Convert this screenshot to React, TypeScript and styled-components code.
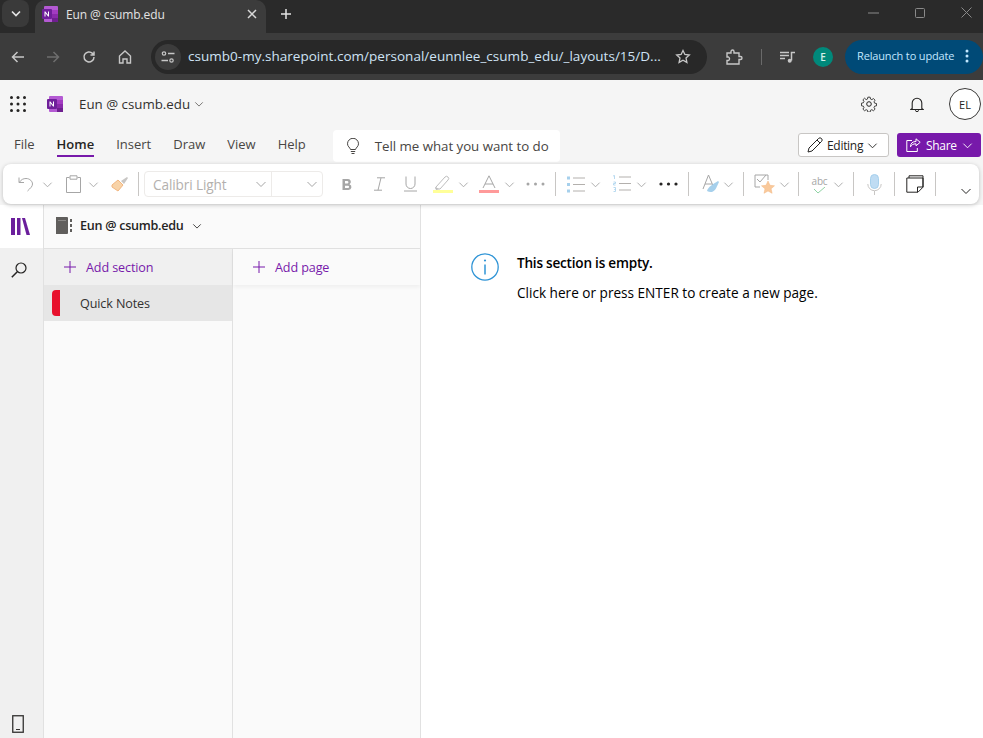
import React from "react";
import styled, { createGlobalStyle } from "styled-components";

const Global = createGlobalStyle`
  html, body { margin: 0; padding: 0; height: 100%; background: #fff; overflow: hidden; }
  #root { height: 100%; }
  * { box-sizing: border-box; }
`;

const F = `"Open Sans", "Noto Sans", "Liberation Sans", sans-serif`;

const Page = styled.div`
  width: 983px; height: 738px; display: flex; flex-direction: column; overflow: hidden;
  font-family: ${F}; color: #252423;
`;
const TabStrip = styled.div`
  height: 33px; flex: none; background: #2a2a2a; display: flex; align-items: stretch; padding-left: 2px;
`;
const TabSearch = styled.div`
  width: 27px; height: 27px; border-radius: 8px; background: #3a3a3a;
  display: flex; align-items: center; justify-content: center;
`;
const ActiveTab = styled.div`
  width: 231px; margin-left: 6px; background: #3c3c3c; border-radius: 10px 10px 0 0;
  display: flex; align-items: center; padding: 0 9px 5px 7px; gap: 8px;
`;
const TabTitle = styled.span`
  flex: 1; font-size: 12px; letter-spacing: -0.1px; color: #e3e3e3; white-space: nowrap;
`;
const NewTab = styled.div`
  margin-left: 9px; width: 22px; display: flex; align-items: center; justify-content: center; padding-bottom: 6px;
`;
const WindowControls = styled.div`
  margin-left: auto; display: flex; align-items: center; gap: 36px; padding: 0 11px 8px 0;
`;
const Toolbar = styled.div`
  height: 47px; flex: none; background: #3c3c3c; display: flex; align-items: center;
`;
const NavSlot = styled.div<{ $w?: number }>`
  width: ${(p) => p.$w ?? 36}px; display: flex; align-items: center; justify-content: center; flex: none;
`;
const Omnibox = styled.div`
  width: 556px; height: 34px; margin-left: 8px; border-radius: 17px; background: #282828;
  display: flex; align-items: center; padding: 0 16px 0 4px; flex: none;
`;
const SiteIcon = styled.div`
  width: 26px; height: 26px; border-radius: 50%; background: #3c3c3c;
  display: flex; align-items: center; justify-content: center; flex: none;
`;
const Url = styled.span`
  margin-left: 7px; flex: 1; font-size: 13.5px; line-height: 18px; padding-bottom: 1px; letter-spacing: 0.02px; color: #cfe3f5; white-space: nowrap; overflow: hidden;
`;
const Divider = styled.div`
  width: 1px; height: 16px; background: #6a6a6a; flex: none;
`;
const Avatar = styled.div`
  width: 20px; height: 20px; border-radius: 50%; background: #00897b; color: #d5efe9;
  font-size: 10px; font-weight: 600; display: flex; align-items: center; justify-content: center; flex: none;
`;
const Relaunch = styled.div`
  margin-left: 12px; width: 138px; height: 34px; border-radius: 17px; background: #004a77; color: #c2e7ff;
  font-size: 11px; letter-spacing: -0.15px; display: flex; align-items: center; justify-content: space-between; padding: 0 14px 2px 12px; flex: none;
`;
const AppHeader = styled.div`
  height: 46px; flex: none; background: #f5f5f5; display: flex; align-items: center; padding: 2px 2px 0 10px;
`;
const NotebookTitle = styled.span`
  margin-left: 14px; font-size: 13.3px; color: #323130; display: flex; align-items: center; gap: 4px;
`;
const HeaderRight = styled.div`
  margin-left: auto; display: flex; align-items: center; gap: 33px;
`;
const UserCircle = styled.div`
  width: 32px; height: 32px; margin-left: -8px; border-radius: 50%; border: 1px solid #3b3a39; background: #fff;
  font-size: 11px; color: #252423; display: flex; align-items: center; justify-content: center;
`;
const TabsRow = styled.div`
  height: 38px; flex: none; background: #f5f5f5; display: flex; align-items: flex-start; padding: 0 2px 0 14px;
`;
const MenuItem = styled.div<{ $active?: boolean }>`
  font-size: 13px; line-height: 17px; padding: 10px 0 2px; margin-right: 22px;
  color: ${(p) => (p.$active ? "#252423" : "#484644")};
  font-weight: ${(p) => (p.$active ? 600 : 400)};
  border-bottom: 2px solid ${(p) => (p.$active ? "#7719aa" : "transparent")};
`;
const TellMe = styled.div`
  width: 227px; height: 32px; margin-left: 5px; margin-top: 4px; background: #fff; border-radius: 4px;
  display: flex; align-items: center; padding-left: 13px; gap: 15px;
  font-size: 13.3px; letter-spacing: -0.04px; color: #484644; white-space: nowrap;
`;
const RightActions = styled.div`
  margin-left: auto; margin-top: 7px; display: flex; gap: 8px;
`;
const EditingBtn = styled.div`
  width: 91px; height: 24px; background: #fff; border: 1px solid #c8c6c4; border-radius: 3px;
  font-size: 12px; letter-spacing: -0.3px; color: #252423; display: flex; align-items: center; gap: 4px; padding-left: 8px;
`;
const ShareBtn = styled.div`
  width: 84px; height: 24px; background: #7719aa; border-radius: 3px; color: #fff;
  font-size: 12px; letter-spacing: -0.3px; display: flex; align-items: center; gap: 5px; padding-left: 9px;
`;
const RibbonWrap = styled.div`
  flex: none; height: 41px; background: #f5f5f5; padding: 0 4px 0 3px; position: relative; z-index: 3;
`;
const Ribbon = styled.div`
  height: 40px; background: #fff; border-radius: 8px; box-shadow: 0 1px 4px rgba(0,0,0,.22);
  display: flex; align-items: center; padding-left: 15px;
`;
const RibbonSlot = styled.div<{ $w: number; $pad?: number; $align?: string }>`
  width: ${(p) => p.$w}px; flex: none; display: flex; align-items: center;
  padding-left: ${(p) => p.$pad ?? 0}px;
  justify-content: ${(p) => p.$align ?? "flex-start"};
`;
const Spacer = styled.span<{ $w: number }>`
  width: ${(p) => p.$w}px; flex: none;
`;
const Sep = styled.div`
  width: 1px; height: 24px; background: #c8c6c4; flex: none;
`;
const CollapseSlot = styled.div`
  margin-left: 24px; padding-top: 13px; display: flex;
`;
const FontBox = styled.div`
  width: 179px; height: 26px; border: 1px solid #edebe9; border-radius: 4px; margin-left: 5px; flex: none;
  display: grid; grid-template-columns: 127px 1fr; font-size: 13.6px; letter-spacing: -0.1px; color: #b3b0ad;
`;
const FontCell = styled.div<{ $line?: boolean }>`
  display: flex; align-items: center; justify-content: space-between; padding: 0 4px 0 8px;
  border-right: ${(p) => (p.$line ? "1px solid #edebe9" : "none")};
`;
const AbcMark = styled.span`
  width: 19px; text-align: center; line-height: 12px; letter-spacing: -0.2px; font-size: 10px; color: #a6a6a6;
  svg { display: block; margin: 0 auto; }
`;
const Body = styled.div`
  flex: 1; min-height: 0; display: flex; background: #fff;
`;
const Rail = styled.div`
  width: 44px; flex: none; background: #f0f0f0; border-right: 1px solid #e1e1e1; display: flex; flex-direction: column;
`;
const RailTop = styled.div`
  height: 43px; background: #fff; margin-right: -1px; border-right: 1px solid #e1e1e1; display: flex; align-items: center; justify-content: center; padding-right: 2px;
`;
const RailBtn = styled.div`
  height: 44px; display: flex; align-items: center; justify-content: center; padding-right: 5px;
`;
const RailBottom = styled.div`
  margin-top: auto; height: 27px; display: flex; align-items: flex-start; justify-content: center; padding: 4px 8px 0 0;
`;
const NavPane = styled.div`
  width: 377px; flex: none; background: #fafafa; border-right: 1px solid #e1e1e1; display: flex; flex-direction: column;
`;
const NotebookBar = styled.div`
  height: 44px; flex: none; border-bottom: 1px solid #e1e1e1; display: flex; align-items: center; padding: 0 0 2px 11px;
  font-size: 12.6px; font-weight: 600; letter-spacing: -0.28px; color: #252423;
`;
const NotebookName = styled.span`
  margin-left: 8px; margin-right: 9px;
`;
const Columns = styled.div`
  flex: 1; display: flex; min-height: 0;
`;
const SectionCol = styled.div`
  width: 189px; flex: none; border-right: 1px solid #e1e1e1; background: #fafafa; display: flex; flex-direction: column;
`;
const AddRow = styled.div<{ $bg: string; $shadow?: boolean }>`
  height: 36px; flex: none; background: ${(p) => p.$bg}; display: flex; align-items: center; padding-left: 20px; gap: 10px;
  font-size: 12.6px; letter-spacing: -0.12px; color: #7719aa;
  box-shadow: ${(p) => (p.$shadow ? "0 2px 4px rgba(0,0,0,.05)" : "none")};
`;
const SectionRow = styled.div`
  height: 36px; flex: none; background: #e6e6e6; position: relative; display: flex; align-items: center; padding-left: 36px;
  font-size: 12.6px; letter-spacing: -0.12px; color: #323130;
`;
const SectionTab = styled.div`
  position: absolute; left: 8px; top: 5px; width: 8px; height: 26px; background: #e8112d; border-radius: 4px 0 0 4px;
`;
const PagesCol = styled.div`
  flex: 1; background: #fafafa;
`;
const Content = styled.div`
  flex: 1; background: #fff; display: flex; align-items: flex-start; padding: 48px 0 0 50px; gap: 18px;
`;
const Message = styled.div`
  display: flex; flex-direction: column; gap: 12px; color: #000; font-size: 13.6px; line-height: 18px; padding-top: 1px;
`;
const MessageTitle = styled.div`
  font-weight: 600; letter-spacing: -0.23px;
`;

const Chev = ({ c = "#a6a6a6", s = 12 }: { c?: string; s?: number }) => (
  <svg width={s} height={s} viewBox="0 0 12 12" fill="none" style={{ flex: "none" }}>
    <path d="M1.5 4l4.5 4.5L10.5 4" stroke={c} strokeWidth="1" />
  </svg>
);

const OneNote = ({ s = 16 }: { s?: number }) => (
  <svg width={s} height={s} viewBox="0 0 16 16" style={{ flex: "none" }}>
    <rect x="2" y="0" width="14" height="16" rx="1" fill="#b45ad3" />
    <rect x="10" y="4" width="6" height="4" fill="#a33bc2" />
    <rect x="10" y="8" width="6" height="4" fill="#8a2aab" />
    <rect x="10" y="12" width="6" height="4" fill="#6f1f90" />
    <rect x="0" y="3" width="10" height="10" rx="1" fill="#6f1f9a" />
    <path d="M2.5 10.5v-5h.9l2.6 3.3V5.500h1v5h-.9L3.500 7.200v3.300z" fill="#fff" />
  </svg>
);

const Icon = ({ w, h, children, vb }: { w: number; h: number; vb?: string; children: React.ReactNode }) => (
  <svg width={w} height={h} viewBox={vb ?? `0 0 ${w} ${h}`} fill="none" style={{ flex: "none", display: "block" }}>
    {children}
  </svg>
);

const Waffle = () => (
  <Icon w={16} h={16}>
    {[1.5, 8, 14.5].flatMap((y) =>
      [1.5, 8, 14.5].map((x) => <circle key={`${x}-${y}`} cx={x} cy={y} r="1.5" fill="#252423" />)
    )}
  </Icon>
);

const Plus = () => (
  <Icon w={12} h={12}>
    <path d="M6 0v12M0 6h12" stroke="#7719aa" strokeWidth="1" />
  </Icon>
);

export default function App() {
  return (
    <Page>
      <Global />
      <TabStrip>
        <TabSearch>
          <Icon w={10} h={8}>
            <path d="M1 1.500l4 4 4-4" stroke="#e3e3e3" strokeWidth="1.700" />
          </Icon>
        </TabSearch>
        <ActiveTab>
          <OneNote />
          <TabTitle>Eun @ csumb.edu</TabTitle>
          <Icon w={10} h={10}>
            <path d="M1 1l8 8M9 1l-8 8" stroke="#d8d8d8" strokeWidth="1.500" />
          </Icon>
        </ActiveTab>
        <NewTab>
          <Icon w={12} h={12}>
            <path d="M6 1v10M1 6h10" stroke="#e3e3e3" strokeWidth="1.500" />
          </Icon>
        </NewTab>
        <WindowControls>
          <Icon w={11} h={2}>
            <path d="M0 1h11" stroke="#8a8a8a" />
          </Icon>
          <Icon w={10} h={10}>
            <rect x=".5" y=".5" width="9" height="9" rx="1" stroke="#8a8a8a" />
          </Icon>
          <Icon w={11} h={11}>
            <path d="M.5.5l10 10M10.500.5l-10 10" stroke="#8a8a8a" />
          </Icon>
        </WindowControls>
      </TabStrip>
      <Toolbar>
        <NavSlot $w={35}>
          <Icon w={14} h={12}>
            <path d="M13 6H1.500M6.500 1l-5 5 5 5" stroke="#c7c7c7" strokeWidth="1.500" />
          </Icon>
        </NavSlot>
        <NavSlot>
          <Icon w={14} h={12}>
            <path d="M1 6h11.500M7.500 1l5 5-5 5" stroke="#6e6e6e" strokeWidth="1.500" />
          </Icon>
        </NavSlot>
        <NavSlot>
          <Icon w={14} h={14}>
            <path d="M12 7a5 5 0 1 1-1.500-3.600L12 5M12 1.500V5H8.500" stroke="#c7c7c7" strokeWidth="1.500" />
          </Icon>
        </NavSlot>
        <NavSlot>
          <Icon w={14} h={14}>
            <path d="M1.500 13V6L7 1l5.500 5v7H9V9H5v4z" stroke="#c7c7c7" strokeWidth="1.400" />
          </Icon>
        </NavSlot>
        <Omnibox>
          <SiteIcon>
            <Icon w={14} h={12}>
              <circle cx="3" cy="2.500" r="1.700" stroke="#c7c7c7" strokeWidth="1.200" />
              <path d="M7 2.500h6.500M.5 9.500H7" stroke="#c7c7c7" strokeWidth="1.300" />
              <circle cx="10.500" cy="9.500" r="1.700" stroke="#c7c7c7" strokeWidth="1.200" />
            </Icon>
          </SiteIcon>
          <Url>csumb0-my.sharepoint.com/personal/eunnlee_csumb_edu/_layouts/15/D...</Url>
          <Icon w={16} h={15}>
            <path d="M8 1.500l1.900 4 4.400.5-3.300 3 .9 4.400L8 11.200l-3.900 2.200.9-4.400-3.300-3 4.400-.5z" stroke="#c7c7c7" strokeWidth="1.300" />
          </Icon>
        </Omnibox>
        <NavSlot $w={54}>
          <Icon w={17} h={16}>
            <path d="M1 4h4V2.500a1.500 1.500 0 0 1 3 0V4h5v3.500h1.500a1.500 1.500 0 0 1 0 3H13V15H1v-3.500h1.500a2 2 0 0 0 0-3.500H1z" stroke="#c7c7c7" strokeWidth="1.400" />
          </Icon>
        </NavSlot>
        <Divider />
        <NavSlot $w={51}>
          <Icon w={15} h={12}>
            <path d="M0 1.500h9M0 4.500h9M0 7.500h5" stroke="#c7c7c7" strokeWidth="1.300" />
            <path d="M11.500 9.500V1.500H15" stroke="#c7c7c7" strokeWidth="1.500" />
            <circle cx="9.700" cy="9.700" r="2" fill="#c7c7c7" />
          </Icon>
        </NavSlot>
        <Avatar>E</Avatar>
        <Relaunch>
          Relaunch to update
          <Icon w={4} h={14}>
            <circle cx="2" cy="2" r="1.500" fill="#c2e7ff" />
            <circle cx="2" cy="7" r="1.500" fill="#c2e7ff" />
            <circle cx="2" cy="12" r="1.500" fill="#c2e7ff" />
          </Icon>
        </Relaunch>
      </Toolbar>
      <AppHeader>
        <Waffle />
        <Spacer $w={19} />
        <NavSlot $w={20}>
          <OneNote s={16} />
        </NavSlot>
        <NotebookTitle>
          Eun @ csumb.edu <Chev c="#605e5c" s={10} />
        </NotebookTitle>
        <HeaderRight>
          <Icon w={16} h={16}>
            <circle cx="8" cy="8" r="2.300" stroke="#252423" />
            <path d="M6.800.8h2.400l.4 2 1.400.6 1.700-1.100 1.700 1.700-1.100 1.700.6 1.400 2 .4v2.400l-2 .4-.6 1.400 1.100 1.700-1.700 1.700-1.700-1.100-1.400.6-.4 2H6.800l-.4-2-1.400-.6-1.700 1.100-1.700-1.700 1.100-1.700-.6-1.400-2-.4V7.100l2-.4.6-1.400-1.100-1.700 1.700-1.700L5 3.400l1.400-.6z" stroke="#252423" strokeWidth=".9" transform="translate(.4 .4) scale(.95)" />
          </Icon>
          <Icon w={14} h={15}>
            <path d="M2.200 11.500V6a4.800 4.800 0 0 1 9.600 0v5.500l1.200 1H1z" stroke="#252423" strokeWidth="1.100" />
            <path d="M5.500 13.200a1.500 1.500 0 0 0 3 0" stroke="#252423" />
          </Icon>
          <UserCircle>EL</UserCircle>
        </HeaderRight>
      </AppHeader>
      <TabsRow>
        <MenuItem>File</MenuItem>
        <MenuItem $active>Home</MenuItem>
        <MenuItem>Insert</MenuItem>
        <MenuItem>Draw</MenuItem>
        <MenuItem>View</MenuItem>
        <MenuItem>Help</MenuItem>
        <TellMe>
          <Icon w={14} h={17}>
            <path d="M4.500 11.500C4 9.500 1.500 8.500 1.500 5.800a5.500 5.500 0 0 1 11 0c0 2.700-2.500 3.700-3 5.700z" stroke="#484644" />
            <path d="M4.800 13.500h4.400M5.500 15.500h3" stroke="#484644" />
          </Icon>
          Tell me what you want to do
        </TellMe>
        <RightActions>
          <EditingBtn>
            <Icon w={16} h={16}>
              <path d="M1 15l1-4L11.500 1.500a1.500 1.500 0 0 1 3 3L5 14z M10 3l3 3" stroke="#252423" />
            </Icon>
            Editing <Chev c="#252423" s={11} />
          </EditingBtn>
          <ShareBtn>
            <Icon w={15} h={14}>
              <path d="M6 2.500H.8v11h10.500V10" stroke="#fff" />
              <path d="M10 .8l4.200 3.500L10 7.800V5.800c-3 0-4.500 1-5.500 3 0-3.500 2-5.300 5.500-5.300z" stroke="#fff" />
            </Icon>
            Share <Chev c="#fff" s={11} />
          </ShareBtn>
        </RightActions>
      </TabsRow>
      <RibbonWrap>
        <Ribbon>
          <RibbonSlot $w={48}>
            <Icon w={17} h={17}>
              <path d="M1 1.500v5h5M1.300 6.500C3 3.500 5.500 2.500 8 2.500c4 0 6.500 3 6.500 5.500 0 2.500-2 4-5 7" stroke="#a6a6a6" />
            </Icon>
            <Spacer $w={7} />
            <Chev s={11} />
          </RibbonSlot>
          <RibbonSlot $w={45}>
            <Icon w={15} h={18}>
              <path d="M3.500 2.500H.5v15h14v-15h-3" stroke="#a6a6a6" />
              <path d="M4 .8h7v3.400H4z" stroke="#a6a6a6" />
            </Icon>
            <Spacer $w={7} />
            <Chev s={11} />
          </RibbonSlot>
          <RibbonSlot $w={27}>
            <Icon w={18} h={16}>
              <path d="M1 9l6-5 5 5-5 6-6-4z" fill="#f8d3a8" stroke="#f2b680" />
              <path d="M10 5l6-4 1 1-4 6z" fill="#c8c6c4" />
            </Icon>
          </RibbonSlot>
          <Sep />
          <FontBox>
            <FontCell $line>
              Calibri Light <Chev s={12} />
            </FontCell>
            <FontCell>
              <span /> <Chev s={12} />
            </FontCell>
          </FontBox>
          <Spacer $w={18} />
          <RibbonSlot $w={32}>
            <Icon w={13} h={13}>
              <path d="M1.500 1h5.500a2.800 2.800 0 0 1 1.500 5.200A3 3 0 0 1 7.500 12h-6zM4 3v2.500h2.500a1.300 1.300 0 0 0 0-2.500zM4 7.800v2.200h3a1.100 1.100 0 0 0 0-2.200z" fill="#a6a6a6" fillRule="evenodd" />
            </Icon>
          </RibbonSlot>
          <RibbonSlot $w={31}>
            <Icon w={13} h={14}>
              <path d="M4 .8h8M1 13.200h8M8 .8l-3 12.400" stroke="#a6a6a6" />
            </Icon>
          </RibbonSlot>
          <RibbonSlot $w={29}>
            <Icon w={13} h={16}>
              <path d="M2 .5V8a4.500 4.500 0 0 0 9 0V.5M0 15h13" stroke="#a6a6a6" />
            </Icon>
          </RibbonSlot>
          <RibbonSlot $w={46}>
            <Icon w={20} h={18}>
              <path d="M3 12L12 2a2 2 0 0 1 3 3L7 14H3z" stroke="#bdbdbd" />
              <path d="M2 12l4 2-3 1z" fill="#bdbdbd" />
              <rect x="0" y="15" width="20" height="3" fill="#ffff99" />
            </Icon>
            <Spacer $w={5} />
            <Chev s={11} />
          </RibbonSlot>
          <RibbonSlot $w={47}>
            <Icon w={20} h={18}>
              <path d="M4 13L10 .8 16 13M6 9h8" stroke="#a6a6a6" />
              <rect x="0" y="15" width="20" height="3" fill="#ff9a9a" />
            </Icon>
            <Spacer $w={5} />
            <Chev s={11} />
          </RibbonSlot>
          <RibbonSlot $w={29}>
            <Icon w={19} h={4}>
              <circle cx="2" cy="2" r="1.500" fill="#a6a6a6" />
              <circle cx="9.500" cy="2" r="1.500" fill="#a6a6a6" />
              <circle cx="17" cy="2" r="1.500" fill="#a6a6a6" />
            </Icon>
          </RibbonSlot>
          <Sep />
          <Spacer $w={11} />
          <RibbonSlot $w={46}>
            <Icon w={18} h={17}>
              <rect x="0" y="0.500" width="3" height="3" fill="#a6d0ec" />
              <rect x="0" y="7" width="3" height="3" fill="#a6d0ec" />
              <rect x="0" y="13.500" width="3" height="3" fill="#a6d0ec" />
              <path d="M6 2h12M6 8.500h12M6 15h12" stroke="#b3b0ad" />
            </Icon>
            <Spacer $w={5} />
            <Chev s={11} />
          </RibbonSlot>
          <RibbonSlot $w={46}>
            <Icon w={18} h={18}>
              <path d="M0 1l1.500-.5V4M.5 7h2v1.500h-2V10h2M.5 12.500h2v2h-1 1v2h-2" stroke="#a6d0ec" strokeWidth=".8" />
              <path d="M6 2h12M6 8.500h12M6 15h12" stroke="#b3b0ad" />
            </Icon>
            <Spacer $w={5} />
            <Chev s={11} />
          </RibbonSlot>
          <RibbonSlot $w={29}>
            <Icon w={19} h={4}>
              <circle cx="2" cy="2" r="1.600" fill="#252423" />
              <circle cx="9.500" cy="2" r="1.600" fill="#252423" />
              <circle cx="17" cy="2" r="1.600" fill="#252423" />
            </Icon>
          </RibbonSlot>
          <Sep />
          <RibbonSlot $w={54} $pad={12}>
            <Icon w={19} h={20}>
              <path d="M2 15L7.500 1 13 14M4 10h7" stroke="#a6a6a6" />
              <path d="M6 17c1-4 6-7 11-10l1 1c-2 4-3 8-6 9.500-2 1-4 .5-6-.5z" fill="#a6d0ec" />
            </Icon>
            <Spacer $w={3} />
            <Chev s={11} />
          </RibbonSlot>
          <Sep />
          <RibbonSlot $w={54} $pad={10}>
            <Icon w={21} h={20}>
              <path d="M1 1h13v5M1 1v12h5" stroke="#a6a6a6" />
              <path d="M3 5l3 3 6-7" stroke="#a6a6a6" />
              <path d="M14 7l2 4.300 4.500.5-3.400 3 1 4.500L14 17l-4 2.300 1-4.500-3.500-3 4.500-.5z" fill="#f9c99b" stroke="#f2b680" strokeWidth=".5" />
            </Icon>
            <Spacer $w={4} />
            <Chev s={11} />
          </RibbonSlot>
          <Sep />
          <RibbonSlot $w={54} $pad={11}>
            <AbcMark>
              abc
              <svg width="14" height="7" viewBox="0 0 14 7" fill="none">
                <path d="M1 2l4 4 7-6" stroke="#8fd3a4" />
              </svg>
            </AbcMark>
            <Spacer $w={4} />
            <Chev s={11} />
          </RibbonSlot>
          <Sep />
          <RibbonSlot $w={40} $align="center">
            <Icon w={15} h={21}>
              <rect x="3.500" y="0.500" width="8" height="14" rx="4" fill="#bfdcf3" stroke="#a6d0ec" />
              <path d="M.8 10a6.700 6.700 0 0 0 13.400 0M7.500 17v4" stroke="#c8c6c4" />
            </Icon>
          </RibbonSlot>
          <Sep />
          <RibbonSlot $w={40} $align="center">
            <Icon w={18} h={18}>
              <path d="M3 3V.8h14V12" stroke="#252423" />
              <path d="M17 3H.8v14.200H12l5-5V3z" stroke="#252423" />
              <path d="M11.500 17v-5h5.500" stroke="#252423" />
            </Icon>
          </RibbonSlot>
          <Sep />
          <CollapseSlot>
            <Chev c="#252423" s={12} />
          </CollapseSlot>
        </Ribbon>
      </RibbonWrap>
      <Body>
        <Rail>
          <RailTop>
            <Icon w={19} h={17}>
              <rect x="0" y="0" width="4" height="17" fill="#6b1f9c" />
              <rect x="6" y="0" width="3.500" height="17" fill="#6b1f9c" />
              <path d="M11 0h3l5 17h-3.500z" fill="#6b1f9c" />
            </Icon>
          </RailTop>
          <RailBtn>
            <Icon w={16} h={16}>
              <circle cx="10" cy="6" r="5" stroke="#252423" strokeWidth="1.200" />
              <path d="M6.300 9.800L.8 15.200" stroke="#252423" strokeWidth="1.500" />
            </Icon>
          </RailBtn>
          <RailBottom>
            <Icon w={12} h={18}>
              <rect x=".75" y=".75" width="10.500" height="16.500" stroke="#323130" strokeWidth="1.300" />
              <path d="M4 14.500h4" stroke="#323130" strokeWidth="1" />
            </Icon>
          </RailBottom>
        </Rail>
        <NavPane>
          <NotebookBar>
            <Icon w={17} h={17}>
              <path d="M1 0h11a1 1 0 0 1 1 1v15a1 1 0 0 1-1 1H1z" fill="#605e5c" />
              <path d="M3 3.500h8" stroke="#8a8886" />
              <path d="M15 2h2v3h-2zM15 7h2v3h-2zM15 12h2v3h-2z" fill="#605e5c" />
            </Icon>
            <NotebookName>Eun @ csumb.edu</NotebookName>
            <Chev c="#252423" s={10} />
          </NotebookBar>
          <Columns>
            <SectionCol>
              <AddRow $bg="#f0f0f0">
                <Plus />
                Add section
              </AddRow>
              <SectionRow>
                <SectionTab />
                Quick Notes
              </SectionRow>
            </SectionCol>
            <PagesCol>
              <AddRow $bg="#fafafa" $shadow>
                <Plus />
                Add page
              </AddRow>
            </PagesCol>
          </Columns>
        </NavPane>
        <Content>
          <Icon w={28} h={28}>
            <circle cx="14" cy="14" r="13.200" stroke="#2f94d6" strokeWidth="1.300" />
            <path d="M14 11.500v10" stroke="#2f94d6" strokeWidth="1.500" />
            <circle cx="14" cy="7.500" r="1.100" fill="#2f94d6" />
          </Icon>
          <Message>
            <MessageTitle>This section is empty.</MessageTitle>
            <div>Click here or press ENTER to create a new page.</div>
          </Message>
        </Content>
      </Body>
    </Page>
  );
}
